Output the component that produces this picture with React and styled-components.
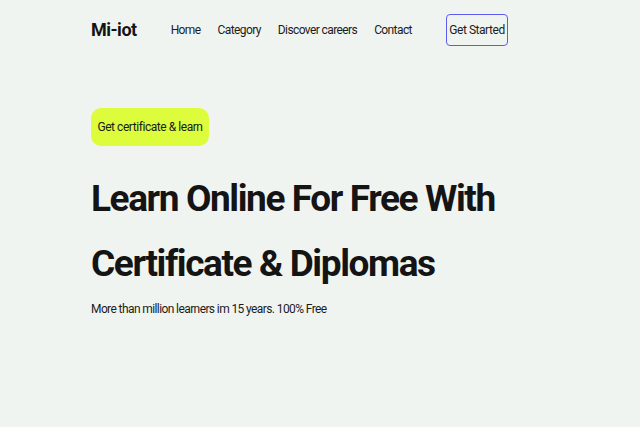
import React from "react";
import styled, { createGlobalStyle } from "styled-components";

const GlobalStyle = createGlobalStyle`
  * {
    box-sizing: border-box;
  }
  body {
    margin: 0;
    background: #f0f4f1;
    font-family: Roboto, "Open Sans", sans-serif;
    color: #141414;
  }
`;

const Page = styled.div`
  min-height: 427px;
  padding: 0 0 0 91px;
`;

const Nav = styled.nav`
  display: flex;
  align-items: center;
  height: 59px;
  width: 417px;
`;

const Logo = styled.div`
  font-size: 18px;
  font-weight: 700;
  letter-spacing: -0.5px;
  margin-right: 34px;
  white-space: nowrap;
`;

const Links = styled.ul`
  display: flex;
  gap: 17px;
  list-style: none;
  margin: 0;
  padding: 0;
  flex: 1;
`;

const LinkItem = styled.li`
  font-size: 12px;
  letter-spacing: -0.6px;
  color: #1c1c1c;
  white-space: nowrap;
`;

const StartButton = styled.button`
  font-family: inherit;
  font-size: 12px;
  letter-spacing: -0.45px;
  color: #1c1c1c;
  background: transparent;
  border: 1px solid #5c5cf2;
  border-radius: 4px;
  height: 32px;
  width: 62px;
  padding: 0;
  white-space: nowrap;
`;

const Hero = styled.section`
  padding-top: 49px;
`;

const Badge = styled.div`
  display: inline-flex;
  align-items: center;
  justify-content: center;
  width: 118px;
  height: 38px;
  background: #dcfc3c;
  border-radius: 10px;
  font-size: 12px;
  letter-spacing: -0.45px;
  color: #1a1a1a;
  white-space: nowrap;
`;

const Title = styled.h1`
  margin: 20px 0 0;
  font-size: 37px;
  line-height: 65px;
  font-weight: 700;
  color: #141414;
  letter-spacing: -1.4px;
  white-space: nowrap;
`;

const Subtitle = styled.p`
  margin: 6px 0 0;
  font-size: 12px;
  letter-spacing: -0.6px;
  color: #1c1c1c;
`;

export default function App() {
  return (
    <Page>
      <GlobalStyle />
      <Nav>
        <Logo>Mi-iot</Logo>
        <Links>
          <LinkItem>Home</LinkItem>
          <LinkItem>Category</LinkItem>
          <LinkItem>Discover careers</LinkItem>
          <LinkItem>Contact</LinkItem>
        </Links>
        <StartButton>Get Started</StartButton>
      </Nav>
      <Hero>
        <Badge>Get certificate &amp; learn</Badge>
        <Title>
          Learn Online For Free With
          <br />
          Certificate &amp; Diplomas
        </Title>
        <Subtitle>More than million learners im 15 years. 100% Free</Subtitle>
      </Hero>
    </Page>
  );
}
